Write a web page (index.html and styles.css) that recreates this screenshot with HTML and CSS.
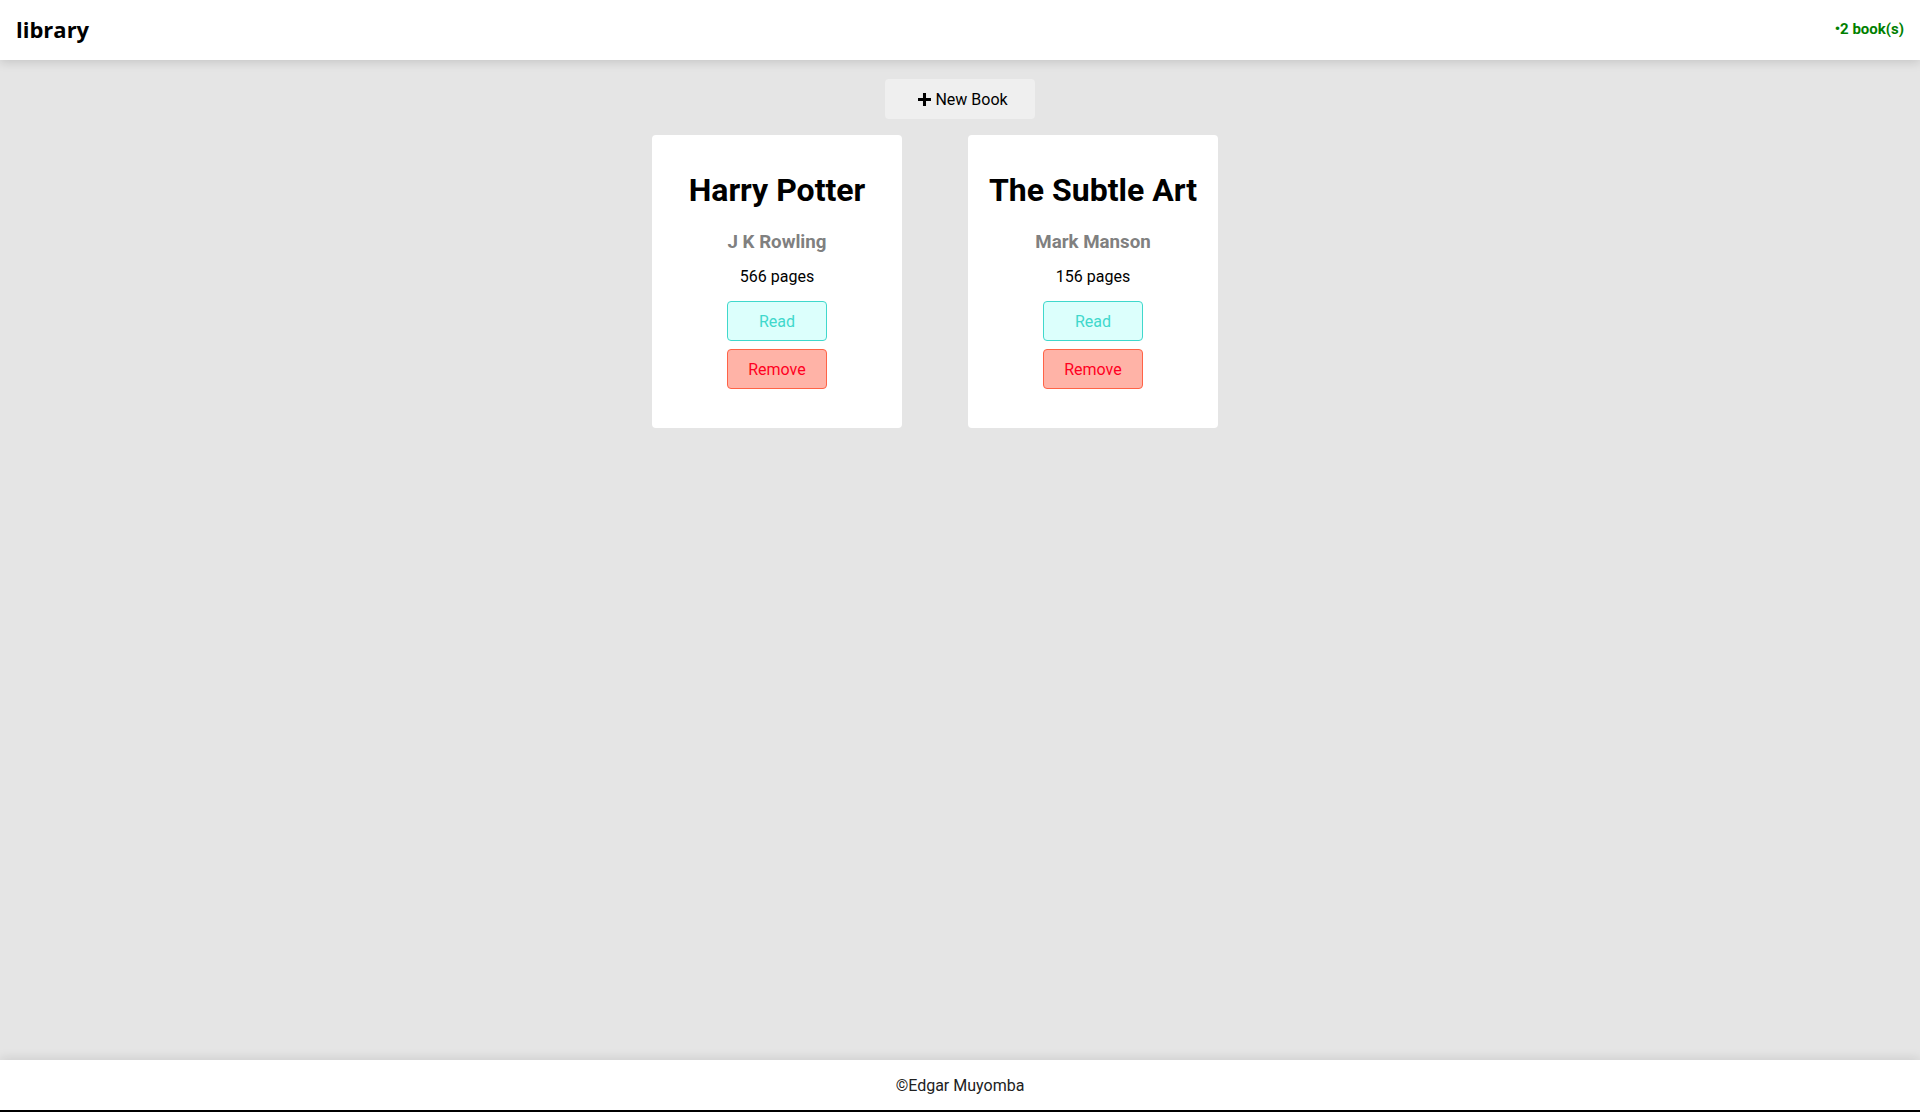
FILE: index.html
```html
<!DOCTYPE html>
<html lang="en">
<head>
<meta charset="utf-8">
<title>library</title>
<link rel="stylesheet" href="styles.css">
</head>
<body>
<div class="page">
  <header class="topbar">
    <h1 class="brand">library</h1>
    <span class="count">•2 book(s)</span>
  </header>
  <main class="main">
    <button class="new-book"><svg class="plus" viewBox="0 0 12 12" width="13" height="13"><path d="M4.6 0h2.8v4.6H12v2.8H7.4V12H4.6V7.4H0V4.6h4.6z" fill="#000"/></svg>New Book</button>
    <section class="shelf">
      <article class="card">
        <h2 class="title">Harry Potter</h2>
        <h3 class="author">J K Rowling</h3>
        <p class="pages">566 pages</p>
        <button class="btn read">Read</button>
        <button class="btn remove">Remove</button>
      </article>
      <article class="card">
        <h2 class="title">The Subtle Art</h2>
        <h3 class="author">Mark Manson</h3>
        <p class="pages">156 pages</p>
        <button class="btn read">Read</button>
        <button class="btn remove">Remove</button>
      </article>
    </section>
  </main>
  <footer class="footer">©Edgar Muyomba</footer>
</div>
</body>
</html>
```

FILE: styles.css
```css
* { box-sizing: border-box; }
html, body { margin: 0; padding: 0; }
body {
  font-family: Roboto, "Liberation Sans", Arial, sans-serif;
  background: #e5e5e5;
  color: #000;
}
.page {
  height: 1112px;
  display: flex;
  flex-direction: column;
  border-bottom: 2px solid #000;
}
.topbar {
  height: 60px;
  flex: none;
  background: #fff;
  display: flex;
  align-items: center;
  justify-content: space-between;
  padding: 0 16px;
  box-shadow: 0 2px 10px rgba(0,0,0,0.15);
  position: relative;
  z-index: 1;
}
.brand {
  margin: 0;
  font-family: "Open Sans", "Noto Sans", sans-serif;
  font-weight: 700;
  font-size: 22px;
  margin-top: -2px;
}
.count {
  color: #008000;
  font-weight: 700;
  font-size: 15px;
  margin-top: -2px;
}
.main {
  flex: 1;
  display: flex;
  flex-direction: column;
  align-items: center;
  padding-top: 19px;
}
.new-book {
  width: 150px;
  height: 40px;
  border: none;
  border-radius: 4px;
  background: #efefef;
  font-family: Roboto, sans-serif;
  font-size: 16px;
  color: #000;
  display: flex;
  align-items: center;
  justify-content: center;
  gap: 4px;
  padding: 0 0 0 6px;
}
.plus { display: block; }
.shelf {
  display: flex;
  gap: 66px;
  margin-top: 16px;
  padding-right: 50px;
}
.card {
  width: 250px;
  height: 293px;
  background: #fff;
  border-radius: 4px;
  display: flex;
  flex-direction: column;
  align-items: center;
  padding-top: 36px;
}
.title {
  margin: 0;
  font-size: 32px;
  font-weight: 700;
  line-height: 38px;
}
.author {
  margin: 22px 0 0;
  font-size: 18.72px;
  font-weight: 700;
  color: #808080;
  line-height: 22px;
}
.pages {
  margin: 14px 0 0;
  font-size: 16px;
  line-height: 19px;
}
.btn {
  width: 100px;
  height: 40px;
  border-radius: 4px;
  font-family: Roboto, sans-serif;
  font-size: 16px;
  padding: 0;
}
.read {
  margin-top: 15px;
  background: #dcfffc;
  border: 1px solid #40d8cc;
  color: #40d8cc;
}
.remove {
  margin-top: 8px;
  background: #ffb3a7;
  border: 1px solid #ff6347;
  color: #ff0022;
}
.footer {
  height: 50px;
  flex: none;
  background: #fff;
  display: flex;
  align-items: center;
  justify-content: center;
  font-size: 16px;
  color: #222;
  box-shadow: 0 -2px 10px rgba(0,0,0,0.1);
}
```
